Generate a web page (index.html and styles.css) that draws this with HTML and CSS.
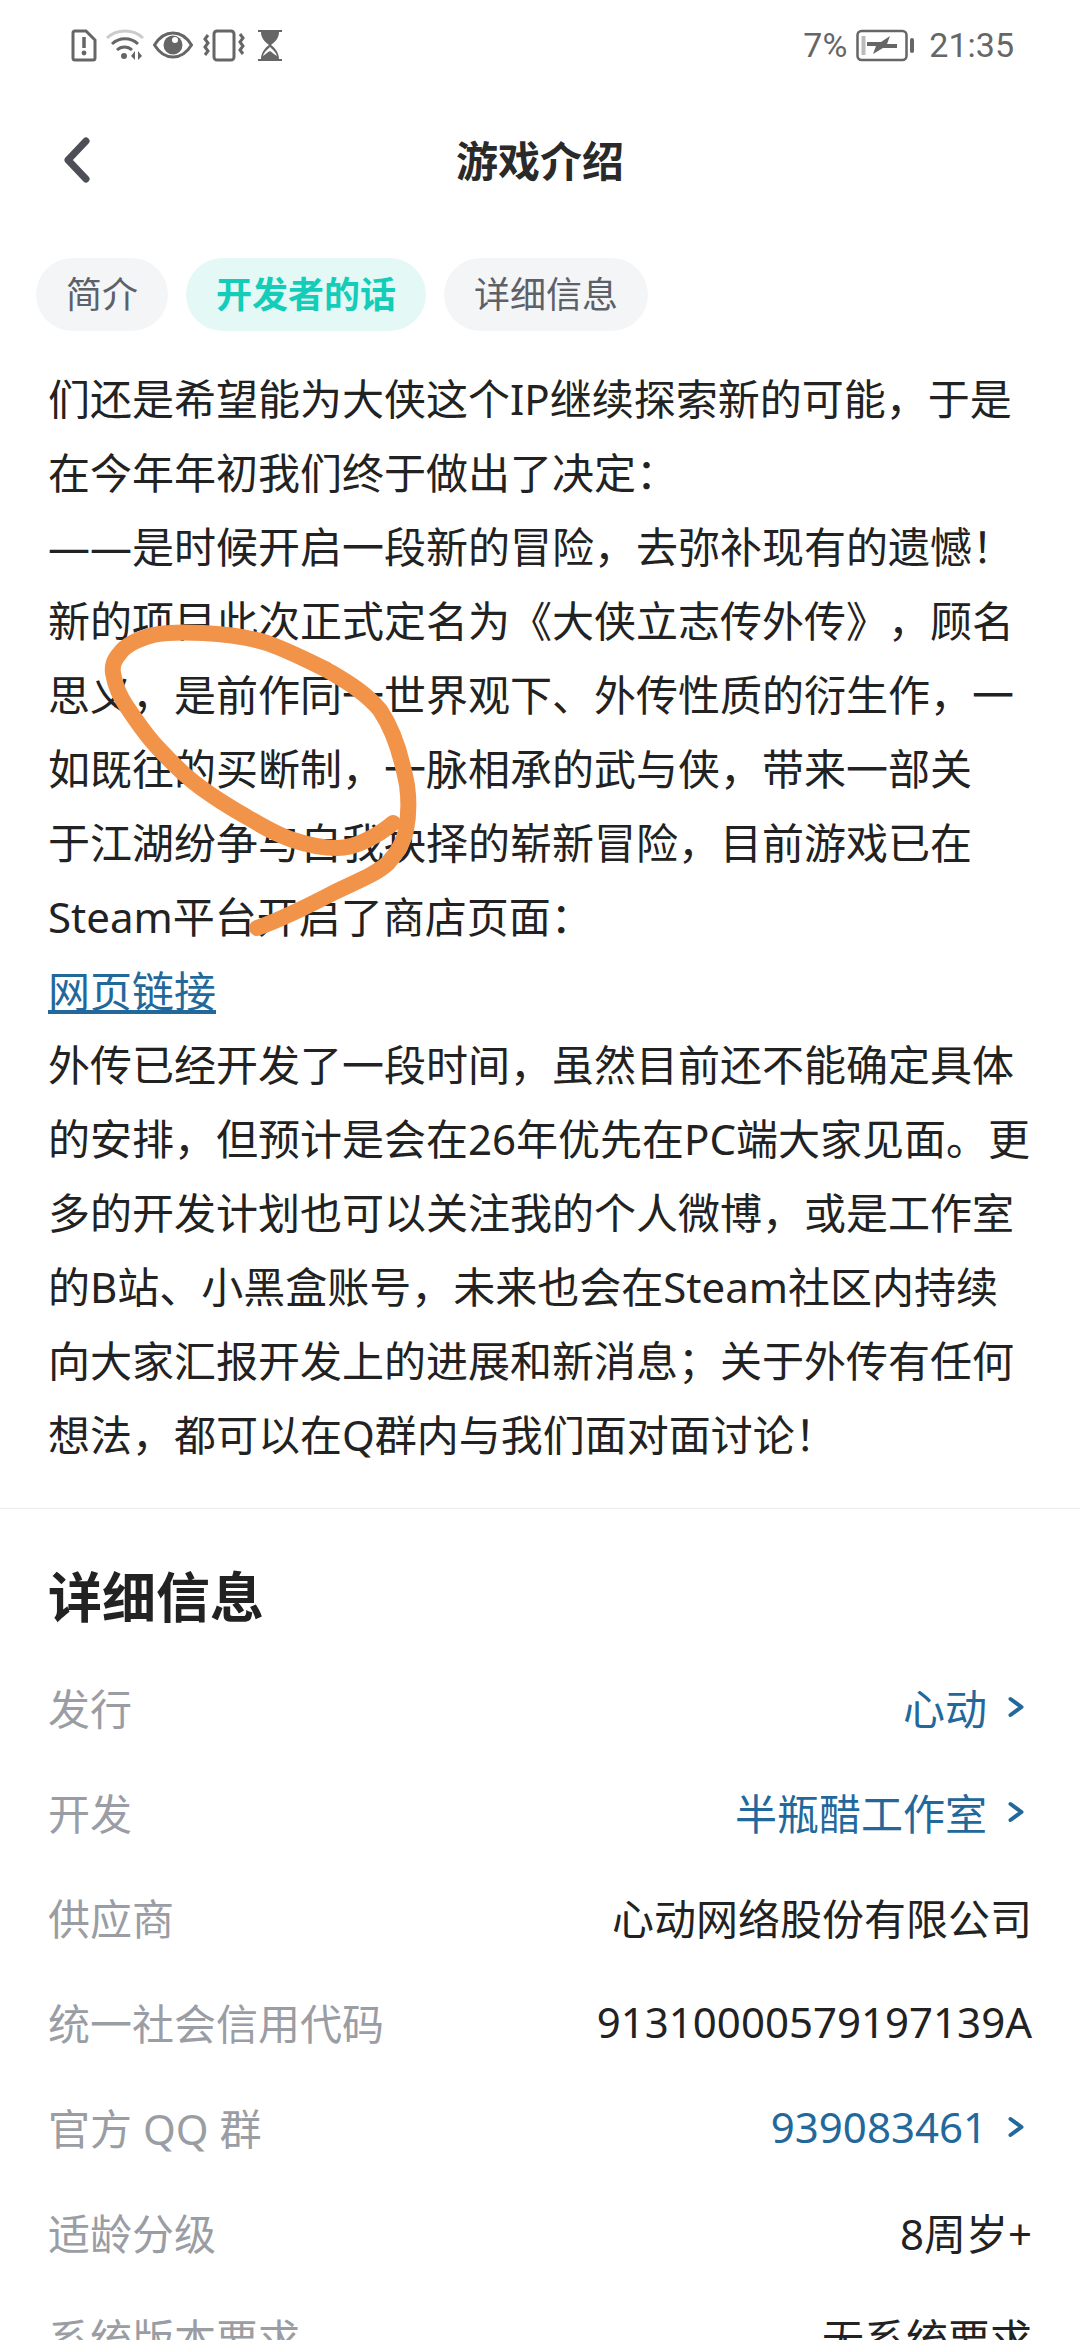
FILE: index.html
```html
<!DOCTYPE html>
<html lang="zh-CN">
<head>
    <meta charset="UTF-8">
    <meta name="viewport" content="width=device-width, initial-scale=1.0">
    <title>游戏介绍</title>
    <link rel="stylesheet" href="styles.css">
</head>
<body>
    <div class="status-bar">
        <div class="status-icons">
            <svg width="26" height="33" viewBox="0 0 26 33"><path d="M4 2h11l9 9v18a2 2 0 0 1-2 2H4a2 2 0 0 1-2-2V4a2 2 0 0 1 2-2z" fill="none" stroke="#666" stroke-width="3"/><path d="M13 8v11" stroke="#666" stroke-width="3.500"/><circle cx="13" cy="24" r="2.400" fill="#666"/></svg>
            <svg width="38" height="33" viewBox="0 0 38 33"><path d="M1 9a27 27 0 0 1 36 0" fill="none" stroke="#ccc" stroke-width="3"/><path d="M6 15a19 19 0 0 1 26 0M11 21a11 11 0 0 1 15 0" fill="none" stroke="#666" stroke-width="3"/><circle cx="18" cy="27" r="3" fill="#666"/><path d="M29 22v9l-4-4zM32 22v9l4-4z" fill="#666"/></svg>
            <svg width="40" height="28" viewBox="0 0 40 28"><path d="M1.500 14C7 5 13 2 20 2s13 3 18.500 12C33 23 27 26 20 26S7 23 1.500 14z" fill="none" stroke="#666" stroke-width="3"/><circle cx="20" cy="14" r="9.500" fill="#666"/><circle cx="22" cy="9" r="3" fill="#fff"/></svg>
            <svg class="icon-vibrate" width="42" height="33" viewBox="0 0 42 33"><rect x="11" y="2" width="20" height="29" rx="3" fill="none" stroke="#666" stroke-width="3"/><path d="M5 6l-3 4 3 4-3 4 3 4-3 4M37 5l3 4-3 4 3 4-3 4 3 4" fill="none" stroke="#666" stroke-width="3"/></svg>
            <svg class="icon-timer" width="24" height="31" viewBox="0 0 24 31"><path d="M0 1h24M0 30h24" stroke="#666" stroke-width="2"/><path d="M3 2h18c0 6-4 10-8 13 3 2 8 7 8 14H3c0-7 5-12 8-14C7 12 3 8 3 2z" fill="#666"/><path d="M12 17c-2 2-6 5-7 9 2-1 3-3 7-5 3 2 5 4 7 5-1-4-5-7-7-9z" fill="#fff"/></svg>
        </div>
        <div class="status-right">
            <span>7%</span>
            <svg class="battery" width="59" height="33" viewBox="0 0 59 33"><rect x="1.500" y="2" width="49" height="29" rx="4" fill="none" stroke="#666" stroke-width="2.500"/><rect x="5.500" y="7" width="4" height="19" fill="#bbb"/><path d="M11 13h14l9-6-3 8h10v4H27l-10 6 3-8H11z" fill="#666"/><rect x="54" y="9" width="4" height="15" rx="2" fill="#666"/></svg>
            <span>21:35</span>
        </div>
    </div>

    <header class="nav">
        <svg class="back" width="26" height="46" viewBox="0 0 26 46"><path d="M22 4L4 23l18 19" fill="none" stroke="#4c4f55" stroke-width="7" stroke-linecap="round" stroke-linejoin="round"/></svg>
        <h1>游戏介绍</h1>
    </header>

    <div class="tabs">
        <div class="tab">简介</div>
        <div class="tab active">开发者的话</div>
        <div class="tab">详细信息</div>
    </div>

    <div class="article">
        们还是希望能为大侠这个IP继续探索新的可能，于是<br>
        在今年年初我们终于做出了决定：<br>
        ——是时候开启一段新的冒险，去弥补现有的遗憾！<br>
        新的项目此次正式定名为《大侠立志传外传》，顾名<br>
        思义，是前作同一世界观下、外传性质的衍生作，一<br>
        如既往的买断制，一脉相承的武与侠，带来一部关<br>
        于江湖纷争与自我抉择的崭新冒险，目前游戏已在<br>
        Steam平台开启了商店页面：<br>
        <a class="link" href="#">网页链接</a><br>
        外传已经开发了一段时间，虽然目前还不能确定具体<br>
        的安排，但预计是会在26年优先在PC端大家见面。更<br>
        多的开发计划也可以关注我的个人微博，或是工作室<br>
        的B站、小黑盒账号，未来也会在Steam社区内持续<br>
        向大家汇报开发上的进展和新消息；关于外传有任何<br>
        想法，都可以在Q群内与我们面对面讨论！
    </div>

    <section class="details">
        <h2>详细信息</h2>
        <div class="row"><span class="key">发行</span><span class="val link-val">心动<svg class="chev" width="16" height="22" viewBox="0 0 16 22"><path d="M2.500 3l11 8-11 8" fill="none" stroke="#23689b" stroke-width="4" stroke-linecap="round" stroke-linejoin="round"/></svg></span></div>
        <div class="row"><span class="key">开发</span><span class="val link-val">半瓶醋工作室<svg class="chev" width="16" height="22" viewBox="0 0 16 22"><path d="M2.500 3l11 8-11 8" fill="none" stroke="#23689b" stroke-width="4" stroke-linecap="round" stroke-linejoin="round"/></svg></span></div>
        <div class="row"><span class="key">供应商</span><span class="val">心动网络股份有限公司</span></div>
        <div class="row"><span class="key">统一社会信用代码</span><span class="val">91310000579197139A</span></div>
        <div class="row"><span class="key">官方 QQ 群</span><span class="val link-val">939083461<svg class="chev" width="16" height="22" viewBox="0 0 16 22"><path d="M2.500 3l11 8-11 8" fill="none" stroke="#23689b" stroke-width="4" stroke-linecap="round" stroke-linejoin="round"/></svg></span></div>
        <div class="row"><span class="key">适龄分级</span><span class="val">8周岁+</span></div>
        <div class="row"><span class="key">系统版本要求</span><span class="val">无系统要求</span></div>
    </section>

    <!-- hand drawn circle on top of the screenshot -->
    <svg class="scribble" width="1080" height="2340" viewBox="0 0 1080 2340">
        <path d="M257 928C285 918 310 905 333 893C355 882 375 875 388 863C398 852 404 842 406 830C409 815 409 800 407 785C405 775 404 770 403 767C398 745 392 728 380 710C365 692 347 682 327 670C307 660 287 650 267 643C247 637 225 634 203 633C185 632 168 632 153 635C135 640 125 646 120 653C114 660 112 665 113 673C115 685 120 697 127 707C137 722 148 738 160 750C172 763 185 776 200 787C215 798 231 808 247 817C262 826 277 835 293 840C308 845 322 848 337 848C347 848 357 845 367 840C377 835 385 830 393 823" fill="none" stroke="#f2934a" stroke-width="16" stroke-linecap="round" stroke-linejoin="round"/>
    </svg>
</body>
</html>
```

FILE: styles.css
```css
* {
    box-sizing: border-box;
}

html, body {
    margin: 0;
    padding: 0;
}

body {
    position: relative;
    width: 1080px;
    height: 2340px;
    overflow: hidden;
    background-color: #fff;
    font-family: "Noto Sans", "Noto Sans CJK SC", sans-serif;
    color: #222;
    text-spacing-trim: space-all;
}

.status-bar {
    display: flex;
    justify-content: space-between;
    align-items: center;
    height: 90px;
    padding: 0 66px 0 71px;
}

.status-icons {
    display: flex;
    align-items: center;
    gap: 9px;
}

.icon-vibrate {
    margin-left: 1px;
}

.icon-timer {
    margin-left: 4px;
}

.status-right {
    display: flex;
    align-items: center;
    gap: 9px;
    font-family: Roboto, sans-serif;
    font-size: 34px;
    color: #666;
}

.battery {
    margin-right: 5px;
}

.nav {
    position: relative;
    display: flex;
    justify-content: center;
    align-items: center;
    height: 70px;
    margin-top: 33px;
}

.back {
    position: absolute;
    left: 64px;
    top: 14px;
}

.nav h1 {
    margin: 0;
    font-size: 42px;
    font-weight: 700;
    color: #2a2a2a;
}

.tabs {
    display: flex;
    gap: 18px;
    margin-top: 65px;
    padding-left: 36px;
}

.tab {
    height: 73px;
    line-height: 73px;
    padding: 0 30px;
    border-radius: 37px;
    background-color: #f4f5f7;
    color: #5c6068;
    font-size: 36px;
}

.tab.active {
    background-color: #e4f8f6;
    color: #13cdb8;
    font-weight: 700;
}

.article {
    margin-top: 31px;
    padding-left: 48px;
    font-size: 42px;
    line-height: 74px;
    white-space: nowrap;
    color: #222;
}

.link {
    color: #23689b;
}

.details {
    margin-top: 36px;
    padding: 32px 48px 0;
    border-top: 1px solid #ececec;
}

.details h2 {
    margin: 0;
    font-size: 54px;
    line-height: 113px;
    font-weight: 700;
    color: #222;
}

.row {
    display: flex;
    justify-content: space-between;
    align-items: center;
    height: 105px;
    font-size: 42px;
}

.key {
    color: #9a9da3;
}

.val {
    display: flex;
    align-items: center;
    color: #222;
}

.link-val {
    color: #23689b;
}

.chev {
    margin-left: 21px;
    margin-right: 8px;
}

.scribble {
    position: absolute;
    left: 0;
    top: 0;
}
```
